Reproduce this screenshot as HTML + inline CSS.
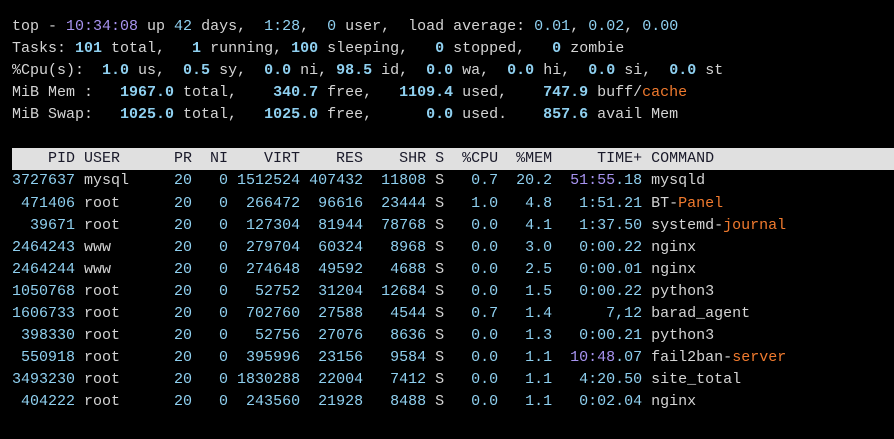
<!DOCTYPE html>
<html><head><meta charset="utf-8"><style>
html,body{margin:0;padding:0;background:#000;width:894px;height:439px;overflow:hidden}
pre{margin:0;position:absolute;left:12px;top:16px;font-family:"Liberation Mono","DejaVu Sans Mono",monospace;font-size:15px;line-height:22.06px;color:#d4d4d4}
.b{color:#8fd0f0}.bb{color:#8fd0f0;font-weight:bold}.p{color:#a793f0}.o{color:#f07a2e}
.h{display:inline-block;background:#e0e0e0;color:#1a1a2a;width:882px}
</style></head><body>
<pre>top - <span class="p">10:34:08</span> up <span class="b">42</span> days,  <span class="b">1:28</span>,  <span class="b">0</span> user,  load average: <span class="b">0.01</span>, <span class="b">0.02</span>, <span class="b">0.00</span>
Tasks: <span class="bb">101</span> total,   <span class="bb">1</span> running, <span class="bb">100</span> sleeping,   <span class="bb">0</span> stopped,   <span class="bb">0</span> zombie
%Cpu(s):  <span class="bb">1.0</span> us,  <span class="bb">0.5</span> sy,  <span class="bb">0.0</span> ni, <span class="bb">98.5</span> id,  <span class="bb">0.0</span> wa,  <span class="bb">0.0</span> hi,  <span class="bb">0.0</span> si,  <span class="bb">0.0</span> st
MiB Mem :   <span class="bb">1967.0</span> total,    <span class="bb">340.7</span> free,   <span class="bb">1109.4</span> used,    <span class="bb">747.9</span> buff/<span class="o">cache</span>
MiB Swap:   <span class="bb">1025.0</span> total,   <span class="bb">1025.0</span> free,      <span class="bb">0.0</span> used.    <span class="bb">857.6</span> avail Mem

<span class="h">    PID USER      PR  NI    VIRT    RES    SHR S  %CPU  %MEM     TIME+ COMMAND</span>
<span class="b">3727637</span> mysql     <span class="b">20   0 1512524 407432  11808</span> S <span class="b">  0.7  20.2  </span><span class="p">51:55</span><span class="b">.18</span> mysqld
<span class="b"> 471406</span> root      <span class="b">20   0  266472  96616  23444</span> S <span class="b">  1.0   4.8   1:51.21</span> BT-<span class="o">Panel</span>
<span class="b">  39671</span> root      <span class="b">20   0  127304  81944  78768</span> S <span class="b">  0.0   4.1   1:37.50</span> systemd-<span class="o">journal</span>
<span class="b">2464243</span> www       <span class="b">20   0  279704  60324   8968</span> S <span class="b">  0.0   3.0   0:00.22</span> nginx
<span class="b">2464244</span> www       <span class="b">20   0  274648  49592   4688</span> S <span class="b">  0.0   2.5   0:00.01</span> nginx
<span class="b">1050768</span> root      <span class="b">20   0   52752  31204  12684</span> S <span class="b">  0.0   1.5   0:00.22</span> python3
<span class="b">1606733</span> root      <span class="b">20   0  702760  27588   4544</span> S <span class="b">  0.7   1.4      7,12</span> barad_agent
<span class="b"> 398330</span> root      <span class="b">20   0   52756  27076   8636</span> S <span class="b">  0.0   1.3   0:00.21</span> python3
<span class="b"> 550918</span> root      <span class="b">20   0  395996  23156   9584</span> S <span class="b">  0.0   1.1  </span><span class="p">10:48</span><span class="b">.07</span> fail2ban-<span class="o">server</span>
<span class="b">3493230</span> root      <span class="b">20   0 1830288  22004   7412</span> S <span class="b">  0.0   1.1   4:20.50</span> site_total
<span class="b"> 404222</span> root      <span class="b">20   0  243560  21928   8488</span> S <span class="b">  0.0   1.1   0:02.04</span> nginx
</pre>
</body></html>
